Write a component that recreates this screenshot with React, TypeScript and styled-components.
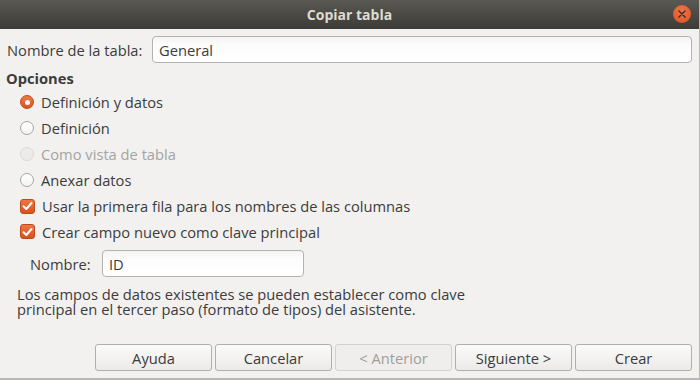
import React from "react";
import styled, { createGlobalStyle, css } from "styled-components";

const GlobalStyle = createGlobalStyle`
  html, body {
    margin: 0;
    padding: 0;
    background: #f2f1f0;
  }
  * {
    box-sizing: border-box;
  }
`;

const Window = styled.div`
  width: 700px;
  height: 380px;
  display: flex;
  flex-direction: column;
  background: #f2f1f0;
  border-right: 1px solid #b9b8b4;
  border-bottom: 2px solid #b9b8b4;
  font-family: "Open Sans", "DejaVu Sans", sans-serif;
  font-size: 14.7px;
  color: #3c3c3c;
  overflow: hidden;
`;

const TitleBar = styled.div`
  height: 29px;
  flex: none;
  display: flex;
  align-items: center;
  justify-content: center;
  position: relative;
  background: linear-gradient(#5a5852, #3c3b37);
  color: #dfdbd2;
  font-weight: bold;
  font-size: 14px;
`;

const CloseButton = styled.div`
  position: absolute;
  right: 8px;
  top: 5px;
  width: 18px;
  height: 18px;
  border-radius: 50%;
  background: radial-gradient(circle at 50% 35%, #f0764a, #d8501f);
  display: flex;
  align-items: center;
  justify-content: center;
`;

const Body = styled.div`
  flex: 1;
  display: flex;
  flex-direction: column;
  padding: 7px 7px 0 6px;
`;

const FieldRow = styled.div<{ $indent?: number; $gap?: number }>`
  display: flex;
  align-items: center;
  padding-left: ${(p) => p.$indent ?? 1}px;
  margin-top: ${(p) => p.$gap ?? 0}px;
`;

const Label = styled.span<{ $width: number }>`
  width: ${(p) => p.$width}px;
  flex: none;
  white-space: nowrap;
`;

const TextInput = styled.div<{ $width?: number }>`
  height: 27px;
  ${(p) =>
    p.$width
      ? css`
          width: ${p.$width}px;
        `
      : css`
          flex: 1;
        `}
  border: 1px solid #b4b3af;
  border-radius: 4px;
  background: linear-gradient(#f4f4f3, #fcfcfc 30%, #ffffff);
  padding: 0 6px;
  display: flex;
  align-items: center;
  color: #3c3c3c;
`;

const SectionTitle = styled.div`
  font-weight: bold;
  margin-top: 5px;
  height: 20px;
  line-height: 20px;
`;

const OptionList = styled.div`
  display: flex;
  flex-direction: column;
  padding-left: 14px;
  margin-top: 1px;
`;

const Option = styled.label<{ $disabled?: boolean; $height?: number }>`
  display: flex;
  align-items: center;
  gap: 7px;
  height: ${(p) => p.$height ?? 26}px;
  color: ${(p) => (p.$disabled ? "#a5a4a1" : "#3c3c3c")};
`;

const Radio = styled.span<{ $checked?: boolean; $disabled?: boolean }>`
  width: 14px;
  height: 14px;
  border-radius: 50%;
  flex: none;
  display: flex;
  align-items: center;
  justify-content: center;
  ${(p) =>
    p.$checked
      ? css`
          background: linear-gradient(#f07846, #d9541f);
          border: 1px solid #c2491a;
        `
      : p.$disabled
      ? css`
          background: #ecebea;
          border: 1px solid #d9d8d5;
        `
      : css`
          background: linear-gradient(#ffffff, #f3f3f2);
          border: 1px solid #a7a6a2;
        `}
`;

const RadioDot = styled.span`
  width: 5px;
  height: 5px;
  border-radius: 50%;
  background: #ffffff;
`;

const CheckBox = styled.span`
  width: 15px;
  height: 15px;
  border-radius: 3px;
  flex: none;
  background: linear-gradient(#ee7645, #d6531f);
  border: 1px solid #bd4a1c;
  display: flex;
  align-items: center;
  justify-content: center;
`;

const Note = styled.p`
  margin: 10px 0 0 11px;
  line-height: 15px;
`;

const NoteLine = styled.span`
  display: block;
  white-space: nowrap;
`;

const ButtonBar = styled.div`
  margin-top: auto;
  margin-bottom: 7px;
  display: flex;
  justify-content: flex-end;
  gap: 3px;
`;

const Button = styled.div<{ $disabled?: boolean }>`
  width: 117px;
  height: 27px;
  border-radius: 3px;
  display: flex;
  align-items: center;
  justify-content: center;
  ${(p) =>
    p.$disabled
      ? css`
          background: #efeeed;
          border: 1px solid #d2d1ce;
          color: #a09f9b;
        `
      : css`
          background: linear-gradient(#fbfbfa, #ebeae8);
          border: 1px solid #b0afab;
          color: #3c3c3c;
        `}
`;

const Check = () => (
  <svg width="11" height="10" viewBox="0 0 11 10">
    <path
      d="M1.5 5.2 L4.3 8 L9.5 2"
      fill="none"
      stroke="#ffffff"
      strokeWidth="2"
      strokeLinecap="round"
      strokeLinejoin="round"
    />
  </svg>
);

const App = () => {
  return (
    <>
      <GlobalStyle />
      <Window>
        <TitleBar>
          Copiar tabla
          <CloseButton>
            <svg width="8" height="8" viewBox="0 0 8 8">
              <path
                d="M1 1 L7 7 M7 1 L1 7"
                stroke="#3a2a22"
                strokeWidth="1.4"
                strokeLinecap="round"
              />
            </svg>
          </CloseButton>
        </TitleBar>
        <Body>
          <FieldRow>
            <Label $width={145}>Nombre de la tabla:</Label>
            <TextInput>General</TextInput>
          </FieldRow>
          <SectionTitle>Opciones</SectionTitle>
          <OptionList>
            <Option>
              <Radio $checked>
                <RadioDot />
              </Radio>
              Definición y datos
            </Option>
            <Option>
              <Radio />
              Definición
            </Option>
            <Option $disabled>
              <Radio $disabled />
              Como vista de tabla
            </Option>
            <Option>
              <Radio />
              Anexar datos
            </Option>
            <Option>
              <CheckBox>
                <Check />
              </CheckBox>
              Usar la primera fila para los nombres de las columnas
            </Option>
            <Option $height={25}>
              <CheckBox>
                <Check />
              </CheckBox>
              Crear campo nuevo como clave principal
            </Option>
          </OptionList>
          <FieldRow $indent={24} $gap={6}>
            <Label $width={72}>Nombre:</Label>
            <TextInput $width={202}>ID</TextInput>
          </FieldRow>
          <Note>
            <NoteLine>
              Los campos de datos existentes se pueden establecer como clave
            </NoteLine>
            <NoteLine>
              principal en el tercer paso (formato de tipos) del asistente.
            </NoteLine>
          </Note>
          <ButtonBar>
            <Button>Ayuda</Button>
            <Button>Cancelar</Button>
            <Button $disabled>&lt; Anterior</Button>
            <Button>Siguiente &gt;</Button>
            <Button>Crear</Button>
          </ButtonBar>
        </Body>
      </Window>
    </>
  );
};

export default App;
